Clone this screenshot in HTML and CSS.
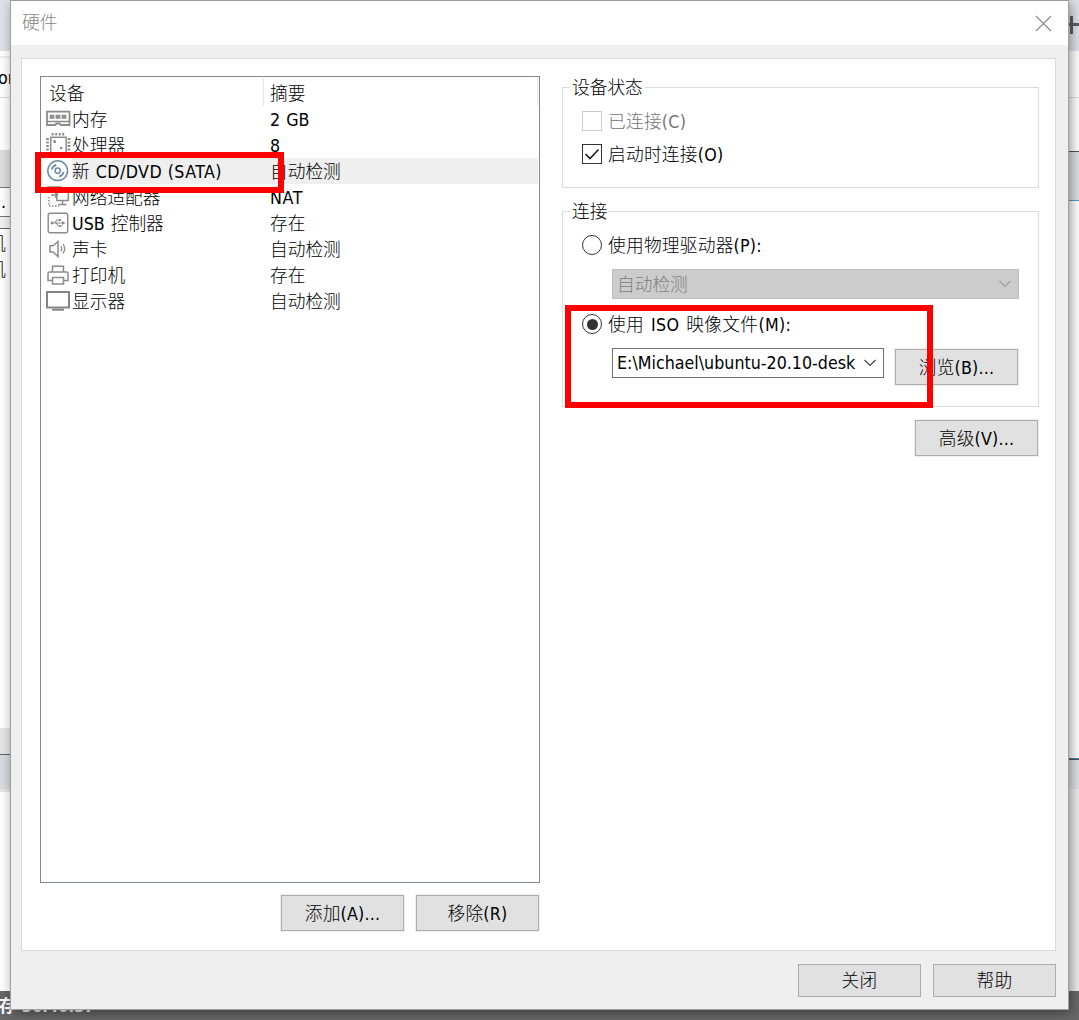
FILE: index.html
```html
<!DOCTYPE html>
<html lang="zh-CN">
<head>
<meta charset="utf-8">
<title>硬件</title>
<link rel="stylesheet" href="styles.css">
</head>
<body>
<div class="desktop">
  <div class="strip strip-left">
    <div class="l-tabs"></div>
    <div class="l-address"><span>or</span></div>
    <div class="l-blank"></div>
    <div class="l-tool"></div>
    <div class="l-search"><span>..</span></div>
    <div class="l-gap"></div>
    <div class="l-list"><span>机</span><span>机</span></div>
    <div class="l-bar"></div>
    <div class="l-bar2"></div>
    <div class="l-rest"></div>
  </div>
  <div class="strip strip-right">
    <div class="r-tabs"><svg width="11" height="50" viewBox="0 0 11 50"><path d="M0 24.500H11M3.500 16V34" stroke="#5c6065" stroke-width="3"/></svg></div>
    <div class="r-address"></div>
    <div class="r-blank"></div>
    <div class="r-tool"></div>
    <div class="r-list"></div>
    <div class="r-bar"></div>
    <div class="r-rest"></div>
  </div>
  <div class="taskbar"><span>存 56:40:37</span></div>
</div>

<div class="dialog">
  <div class="titlebar"><span>硬件</span>
    <svg width="17" height="17" viewBox="0 0 17 17"><path d="M1 1L16 16M16 1L1 16" stroke="#888" stroke-width="1.1"/></svg>
  </div>
  <div class="panel">
    <div class="left">
      <div class="table">
        <div class="head"><span class="c1">设备</span><span class="c2">摘要</span></div>
        <div class="row"><svg class="ic" viewBox="0 0 26 26"><path d="M1 5.700H23.500V19H15L13.500 17.500H10.500L9 19H1Z" fill="none" stroke="#8b8b8b" stroke-width="1.800"/><path d="M1 15.500H24" stroke="#8b8b8b" stroke-width="1.500"/><path d="M4.500 9.500H7.500V12H4.500ZM10.500 9.500H13.500V12H10.500ZM16.500 9.500H19.500V12H16.500Z" fill="#aaa" stroke="#8b8b8b" stroke-width="1.700"/></svg><span class="name">内存</span><span class="sum">2 GB</span></div>
        <div class="row"><svg class="ic" viewBox="0 0 26 26"><rect x="4.700" y="5.300" width="15.500" height="16" fill="none" stroke="#8b8b8b" stroke-width="1.500"/><path d="M5.700 2.300H19.500M5.700 23.700H19.500" stroke="#8b8b8b" stroke-width="2.600" stroke-dasharray="2 1.500"/><path d="M1.500 6V21M23 6V21" stroke="#8b8b8b" stroke-width="2.600" stroke-dasharray="2 1.500"/><circle cx="8.700" cy="9.500" r="1.500" fill="#8b8b8b"/><circle cx="15.200" cy="16" r="1.300" fill="#8b8b8b"/></svg><span class="name">处理器</span><span class="sum">8</span></div>
        <div class="row selected"><svg class="ic" viewBox="0 0 26 26"><g fill="none" stroke="#6f8ca6" stroke-width="1.500"><circle cx="11.700" cy="12.700" r="9.900"/><circle cx="11.700" cy="12.700" r="2.600"/><path d="M5.700 11.500A6.500 6.500 0 0 1 10.200 6.900M17.700 14A6.500 6.500 0 0 1 13.200 18.600" stroke-width="1.800"/></g></svg><span class="name cd">新 CD/DVD (SATA)</span><span class="sum">自动检测</span></div>
        <div class="row"><svg class="ic" viewBox="0 0 26 26"><g fill="none" stroke="#8b8b8b" stroke-width="1.500"><path d="M2 8V3H15V7M5 11H11M9 8.500L11.500 11L9 13.500"/><rect x="10.800" y="7.500" width="11.500" height="9"/><path d="M16.500 16.500V20M12.500 20.500H20.500"/><path d="M3 13V22H13" stroke-dasharray="1.500 1.500"/></g></svg><span class="name">网络适配器</span><span class="sum nat">NAT</span></div>
        <div class="row"><svg class="ic" viewBox="0 0 26 26"><g fill="none" stroke="#8b8b8b" stroke-width="1.400"><rect x="2.200" y="3.200" width="19.500" height="19.500" rx="2"/><path d="M6 13H17M8.500 13L11 10H13M10 13L12.500 16H14" stroke-width="1.100"/></g><circle cx="6" cy="13" r="1.400" fill="#8b8b8b"/><path d="M16 11L19.500 13L16 15ZM13 9H15V11H13ZM13.500 15H15.500V17H13.500Z" fill="#8b8b8b"/></svg><span class="name">USB 控制器</span><span class="sum">存在</span></div>
        <div class="row"><svg class="ic" viewBox="0 0 26 26"><g fill="none" stroke="#8b8b8b" stroke-width="1.500"><path d="M4 9.700H7L12 5.500V20.500L7 16H4Z"/><path d="M15 10Q16.500 12.700 15 15.400M17 8Q20.300 12.700 17 17.400" stroke-width="1.300"/></g></svg><span class="name">声卡</span><span class="sum">自动检测</span></div>
        <div class="row"><svg class="ic" viewBox="0 0 26 26"><g fill="none" stroke="#8b8b8b" stroke-width="1.500"><path d="M6.500 10V4.300H17.500V10M6.500 18.500H2V11.500Q2 10 3.500 10H20.500Q22 10 22 11.500V18.500H17.500"/><rect x="6.500" y="15.500" width="11" height="6.500"/></g></svg><span class="name">打印机</span><span class="sum">存在</span></div>
        <div class="row"><svg class="ic" viewBox="0 0 26 26"><rect x="1" y="4" width="22" height="15.500" fill="none" stroke="#858585" stroke-width="2"/><path d="M6 21.700H18" stroke="#858585" stroke-width="2"/></svg><span class="name">显示器</span><span class="sum">自动检测</span></div>
      </div>
      <div class="actions"><div class="btn">添加(A)...</div><div class="btn">移除(R)</div></div>
    </div>
    <div class="right">
      <div class="group status">
        <div class="legend">设备状态</div>
        <div class="opt disabled"><i class="check"></i><span>已连接(C)</span></div>
        <div class="opt"><i class="check on"><svg width="18" height="18" viewBox="0 0 18 18"><path d="M2.500 9L7 13.500L15.500 4.500" fill="none" stroke="#222" stroke-width="1.700"/></svg></i><span>启动时连接(O)</span></div>
      </div>
      <div class="group conn">
        <div class="legend">连接</div>
        <div class="opt"><i class="radio"></i><span>使用物理驱动器(P):</span></div>
        <div class="combo off"><span>自动检测</span><svg width="14" height="8" viewBox="0 0 14 8"><path d="M1.500 1L7 6.500L12.500 1" fill="none" stroke="#a0a0a0" stroke-width="1.200"/></svg></div>
        <div class="opt iso"><i class="radio on"></i><span>使用 ISO 映像文件(M):</span></div>
        <div class="pick">
          <div class="combo"><span>E:\Michael\ubuntu-20.10-desk</span><svg width="14" height="8" viewBox="0 0 14 8"><path d="M1.500 1L7 6.500L12.500 1" fill="none" stroke="#444" stroke-width="1.200"/></svg></div>
          <div class="btn">浏览(B)...</div>
        </div>
      </div>
      <div class="btn adv">高级(V)...</div>
    </div>
  </div>
  <div class="footer"><div class="btn">关闭</div><div class="btn">帮助</div></div>
</div>
<div class="mark mark-device"></div>
<div class="mark mark-iso"></div>
</body>
</html>
```
FILE: styles.css
```css
* { box-sizing: border-box; }
body {
  margin: 0;
  width: 1079px;
  height: 1020px;
  overflow: hidden;
  position: relative;
  font-family: "DejaVu Sans Condensed", "DejaVu Sans", "Noto Sans CJK SC", sans-serif;
  font-stretch: condensed;
  font-weight: 300;
  font-size: 17.7px;
  line-height: 26px;
  word-spacing: 1px;
  color: #000;
  white-space: nowrap;
}
svg { display: block; flex: none; }

/* window behind the dialog */
.desktop {
  display: grid;
  grid-template: 991px 29px / 11px 11px;
  justify-content: space-between;
  background: #fff;
}
.strip { display: flex; flex-direction: column; }
.strip > div { flex: none; }
.l-tabs, .r-tabs { height: 51px; background: #dfe3e8; }
.l-address { height: 42px; margin-top: 5px; border-top: 2px solid #eee; border-bottom: 1px solid #ddd; }
.l-address span { display: block; margin: 7px 0 0 -2px; }
.l-blank { height: 52px; }
.l-tool { height: 37px; background: #dedede; }
.l-search { height: 30px; border-top: 1px solid #777; border-bottom: 1px solid #777; }
.l-search span { display: block; margin-top: 1px; margin-left: -4px; }
.l-gap { height: 12px; background: #f2f2f2; border-bottom: 1px solid #666; }
.l-list { height: 499px; padding-top: 2px; }
.l-list span { display: block; margin-left: -12px; }
.l-bar { height: 26px; background: #e5e5e5; }
.l-bar2 { height: 38px; background: #d8dbdf; border-top: 1px solid #59636b; border-bottom: 3px solid #e6e6e6; }
.r-address { height: 47px; border-bottom: 1px solid #ddd; }
.r-blank { height: 54px; border-bottom: 1px solid #555; }
.r-tool { height: 49px; background: #dedfe0; border-bottom: 1px solid #559bc5; }
.r-list { height: 557px; }
.r-bar { height: 31px; background: #dfe1e5; border-top: 1px solid #3c86ad; box-shadow: inset 0 1px #555; }
.r-rest { height: 202px; background: #ececec; }
.taskbar { grid-column: 1 / 3; width: 1079px; background: #686868; color: #fff; font-weight: 700; font-size: 17px; letter-spacing: -.4px; }
.taskbar span { display: block; margin: 2px 0 0 -1px; }

.dialog {
  position: absolute;
  left: 11px;
  top: 0;
  width: 1057px;
  height: 1009px;
  background: #efefef;
  border-top: 1px solid #999;
  box-shadow: 0 0 0 1px #a0a0a0, 2px 3px 12px rgba(0, 0, 0, .48);
  display: flex;
  flex-direction: column;
}
.titlebar {
  height: 44px;
  background: #fff;
  color: #858585;
  display: flex;
  justify-content: space-between;
  align-items: center;
  padding: 0 16px 0 11px;
}
.panel {
  height: 893px;
  margin: 13px 12px 0 10px;
  background: #fff;
  border: 1px solid #dadada;
  display: flex;
  gap: 22px;
  padding: 17px 16px 0 18px;
}
.left { width: 500px; }
.table { height: 807px; border: 1px solid #828790; padding: 1px; }
.head { display: flex; height: 28px; line-height: 32px; border-right: 1px solid #e5e5e5; }
.head .c1 { width: 222px; padding-left: 7px; border-right: 1px solid #e5e5e5; }
.head .c2 { padding-left: 6px; }
.row { display: flex; height: 26px; line-height: 28px; padding-left: 4px; }
.ic { width: 26px; height: 26px; }
.name { width: 198px; height: 26px; }
.sum { flex: 1; height: 26px; }
.selected .name, .selected .sum { background: #efefef; }
.cd { letter-spacing: .45px; word-spacing: 0; }
.nat { letter-spacing: .7px; }
.actions { display: flex; justify-content: flex-end; gap: 12px; margin: 12px 1px 0 0; }
.btn {
  width: 123px;
  height: 36px;
  line-height: 37px;
  border: 1px solid #adadad;
  background: #e1e1e1;
  box-shadow: 0 0 0 1px #f0f0f0;
  text-align: center;
  letter-spacing: .2px;
}
.right { width: 477px; display: flex; flex-direction: column; padding-top: 11px; }
.group { border: 1px solid #dcdcdc; padding-left: 19px; }
.legend { width: max-content; height: 26px; line-height: 28px; margin: -14px 0 0 -12px; padding: 0 2px; background: #fff; }
.status { height: 101px; }
.conn { height: 196px; margin-top: 23px; }
.opt { display: flex; align-items: center; gap: 6px; height: 20px; letter-spacing: .25px; }
.opt span { padding-top: 2px; }
.status .opt { margin-top: 11px; }
.status .opt + .opt { margin-top: 13px; }
.disabled { color: #757575; }
.check, .radio { width: 20px; height: 20px; border: 1px solid #333; background: #fff; flex: none; }
.disabled .check { border-color: #ccc; }
.radio { border-radius: 50%; display: flex; align-items: center; justify-content: center; }
.radio.on::after { content: ""; width: 11px; height: 11px; border-radius: 50%; background: #333; }
.conn .opt { margin-top: 11px; }
.combo {
  width: 272px;
  height: 30px;
  border: 1px solid #707070;
  display: flex;
  justify-content: space-between;
  align-items: center;
  padding: 0 6px 0 4px;
}
.combo.off { width: 407px; margin: 14px 0 0 30px; background: #ccc; border-color: #bfbfbf; color: #808080; }
.combo.off span { padding-top: 2px; }
.conn .iso { margin-top: 15px; word-spacing: 1.5px; letter-spacing: .35px; }
.pick { display: flex; gap: 11px; margin: 14px 0 0 30px; }
.pick .btn { margin-top: 1px; }
.adv { margin: 13px 0 0 353px; }
.footer { display: flex; justify-content: flex-end; gap: 12px; margin: 13px 12px 0 0; }
.footer .btn { height: 33px; line-height: 32px; box-shadow: none; }

/* highlight frames drawn over the dialog */
.mark { position: absolute; border: 6px solid #f00; }
.mark-device { left: 35px; top: 152px; width: 249px; height: 41px; }
.mark-iso { left: 565px; top: 305px; width: 368px; height: 103px; }
```
